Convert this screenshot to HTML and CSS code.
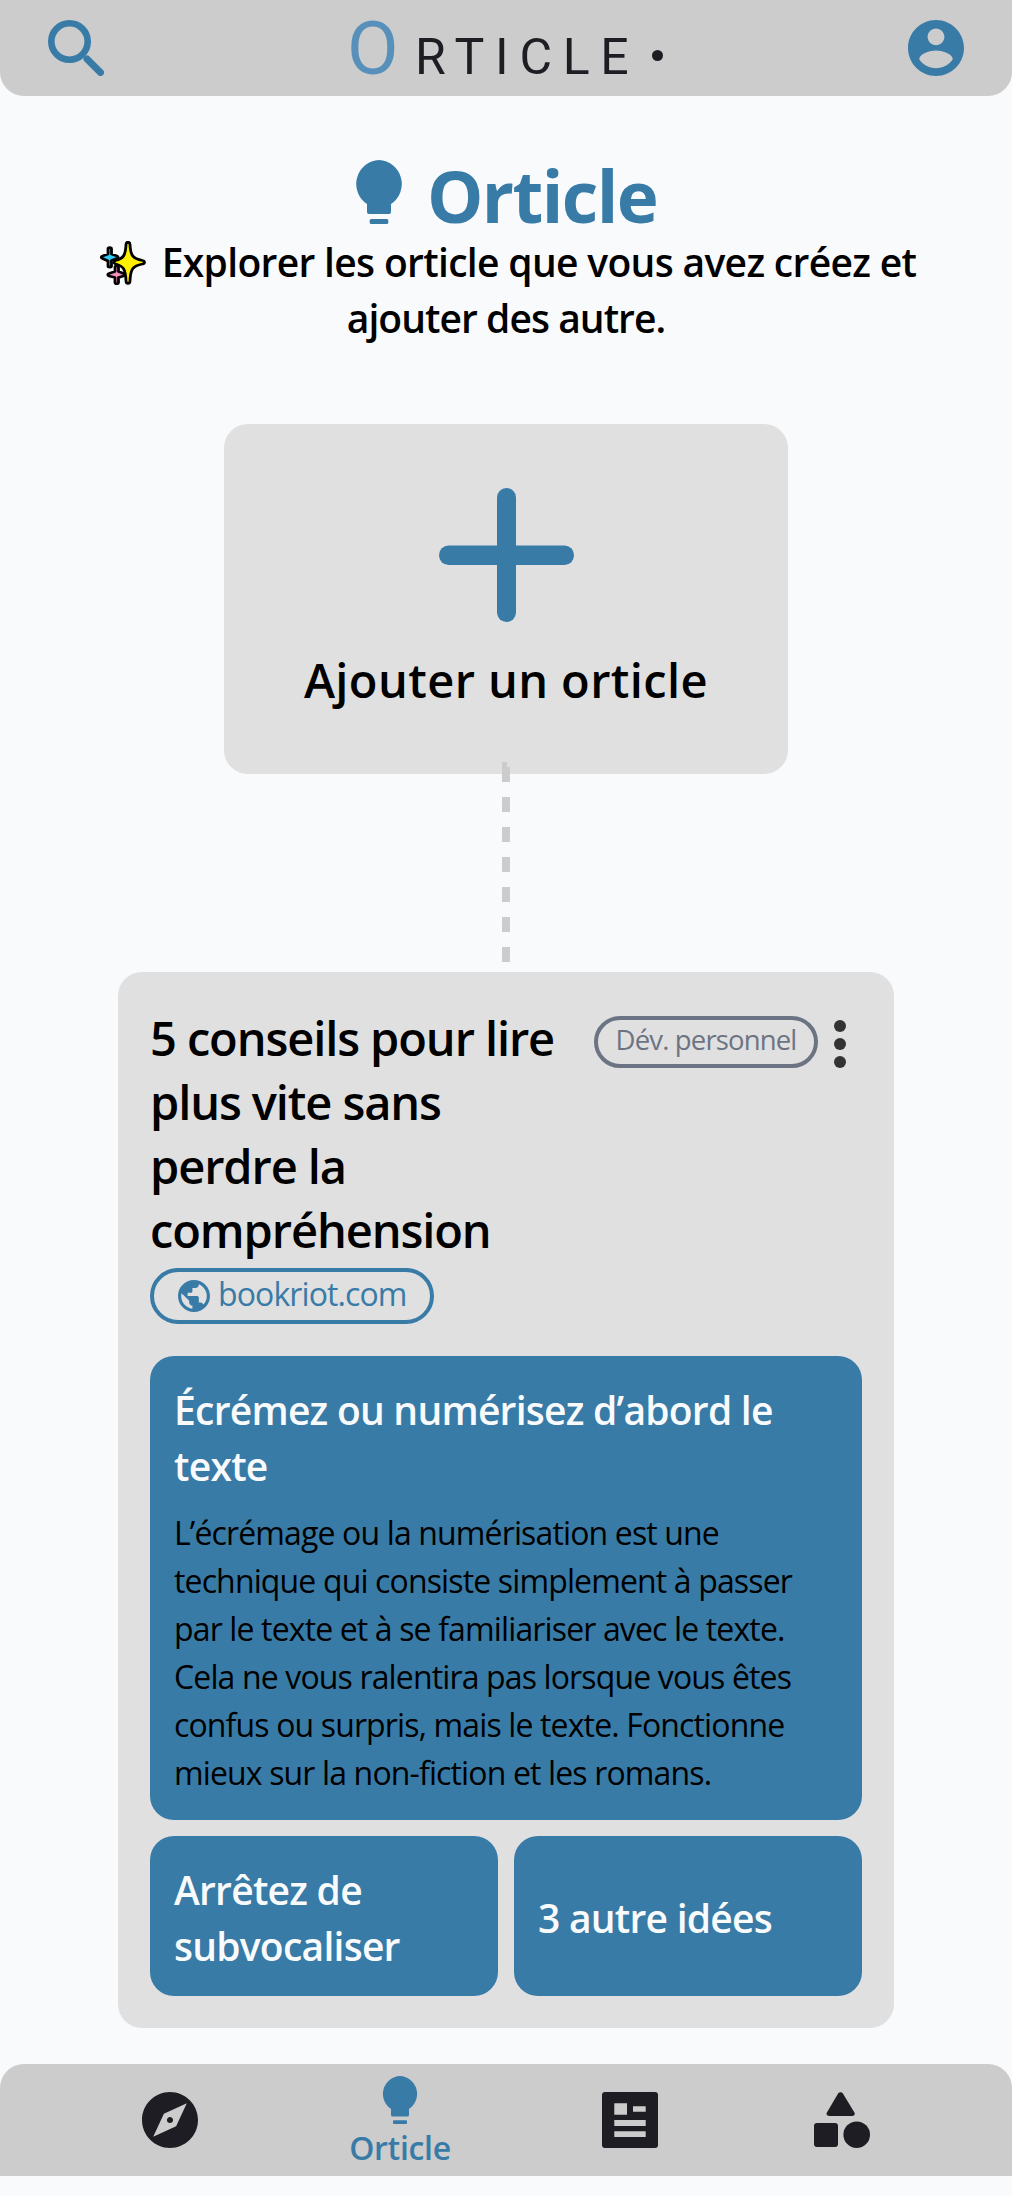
FILE: index.html
```html
<!DOCTYPE html>
<html lang="fr">
<head>
<meta charset="utf-8">
<title>Orticle</title>
<link rel="stylesheet" href="styles.css">
</head>
<body>
<header class="topbar">
  <svg class="icon-56" viewBox="0 0 56 56" fill="none" stroke="currentColor"><circle cx="21.5" cy="21.5" r="18.2" stroke-width="6.6"/><path d="M39 39 52.5 52.5" stroke-width="7" stroke-linecap="round"/></svg>
  <div class="logo"><span class="logo-o">O</span><span class="logo-rest">RTICLE</span><span class="logo-dot"></span></div>
  <svg class="icon-56" viewBox="2 2 20 20" fill="currentColor"><path d="M12 2C6.480 2 2 6.480 2 12s4.480 10 10 10 10-4.480 10-10S17.520 2 12 2zm0 3c1.660 0 3 1.340 3 3s-1.340 3-3 3-3-1.340-3-3 1.340-3 3-3zm0 14.200c-2.500 0-4.710-1.280-6-3.220.030-1.990 4-3.080 6-3.080 1.990 0 5.970 1.090 6 3.080-1.290 1.940-3.500 3.220-6 3.220z"/></svg>
</header>
<main class="page">
  <section class="intro">
    <h1 class="title">
      <svg class="bulb" viewBox="0 0 48 64" fill="currentColor"><path d="M24 0a24 24 0 0 1 12 44v8a2 2 0 0 1-2 2H14a2 2 0 0 1-2-2v-8A24 24 0 0 1 24 0z"/><rect x="14.700" y="59" width="18.600" height="5" rx="1.500"/></svg>
      <span>Orticle</span>
    </h1>
    <p class="subtitle"><svg class="sparkles" viewBox="0 0 46 44" stroke="#000" stroke-width="2.800" stroke-linejoin="round"><path fill="#f78fbe" d="M15 26c0-1.500 3.500-1.500 3.500 0v4.500l5 2c1.400.600 1.400 2 0 2.500l-5 1.500v5c0 1.700-3.500 1.700-3.500 0v-5L9 35c-1.600-.500-1.600-2 0-2.500l6-2z"/><path fill="#2fcaf5" d="M8 8c0-1.800 3.500-1.800 3.500 0v5l5.500 2c1.500.500 1.500 2 0 2.500l-5.500 2V25c0 1.500-3.500 1.500-3.500 0v-5l-5.500-2.500c-1.600-.500-1.600-2 0-2.500L8 13z"/><path fill="#fff000" d="M26 3.500c0-3 4-3 4 0 .500 11 2.500 14 12.500 16 2.600.500 2.600 3 0 3.500-10 2-12 5-12.500 17 0 3-4 3-4 0-.500-12-2.500-15-10.500-17-2-.500-2-3 0-3.500 8-2 10-5 10.500-16z"/></svg><span class="subtitle-lead">Explorer les orticle que vous avez créez et</span><br>ajouter des autre.</p>
  </section>
  <section class="add-card">
    <svg class="plus" viewBox="0 0 135 134" fill="currentColor"><rect x="58" width="19" height="134" rx="9.500"/><rect y="57.500" width="135" height="19.500" rx="9.500"/></svg>
    <h2 class="add-label">Ajouter un orticle</h2>
  </section>
  <svg class="connector" viewBox="0 0 8 200"><rect width="5" height="5"/><path d="M4 5V200" stroke-width="8" stroke-dasharray="15 15"/></svg>
  <article class="card">
    <div class="card-head">
      <h2 class="card-title">5 conseils pour lire<br>plus vite sans<br>perdre la<br>compréhension</h2>
      <span class="tag"><span>Dév. personnel</span></span>
      <svg class="dots" viewBox="0 0 12 48"><circle cx="6" cy="6" r="6"/><circle cx="6" cy="24" r="6"/><circle cx="6" cy="42" r="6"/></svg>
    </div>
    <a class="source"><svg class="globe" viewBox="2 2 20 20" fill="currentColor"><path d="M12 2C6.480 2 2 6.480 2 12s4.480 10 10 10 10-4.480 10-10S17.520 2 12 2zm-1 17.930c-3.950-.490-7-3.850-7-7.930 0-.620.080-1.210.210-1.790L9 15v1c0 1.100.900 2 2 2v1.930zm6.900-2.540c-.260-.810-1-1.390-1.900-1.390h-1v-3c0-.550-.450-1-1-1H8v-2h2c.550 0 1-.450 1-1V7h2c1.100 0 2-.900 2-2v-.410c2.930 1.190 5 4.060 5 7.410 0 2.080-.800 3.970-2.100 5.390z"/></svg><span>bookriot.com</span></a>
    <div class="ideas">
      <div class="idea idea-main">
        <h3 class="idea-title">Écrémez ou numérisez d’abord le<br>texte</h3>
        <p class="idea-text">L’écrémage ou la numérisation est une<br>technique qui consiste simplement à passer<br>par le texte et à se familiariser avec le texte.<br>Cela ne vous ralentira pas lorsque vous êtes<br>confus ou surpris, mais le texte. Fonctionne<br>mieux sur la non-fiction et les romans.</p>
      </div>
      <div class="idea"><h3 class="idea-title">Arrêtez de<br>subvocaliser</h3></div>
      <div class="idea"><h3 class="idea-title">3 autre idées</h3></div>
    </div>
  </article>
</main>
<nav class="bottombar">
  <a class="nav-item"><svg class="icon-56" viewBox="2 2 20 20" fill="currentColor"><path d="M12 10.900c-.610 0-1.100.490-1.100 1.100s.490 1.100 1.100 1.100c.610 0 1.100-.490 1.100-1.100s-.490-1.100-1.100-1.100zM12 2C6.480 2 2 6.480 2 12s4.480 10 10 10 10-4.480 10-10S17.520 2 12 2zm2.190 12.190L6 18l3.810-8.190L18 6l-3.810 8.190z"/></svg></a>
  <a class="nav-item active"><svg class="bulb-small" viewBox="0 0 48 64" fill="currentColor"><path d="M24 0a24 24 0 0 1 12 44v8a2 2 0 0 1-2 2H14a2 2 0 0 1-2-2v-8A24 24 0 0 1 24 0z"/><rect x="14.700" y="59" width="18.600" height="5" rx="1"/></svg><span>Orticle</span></a>
  <a class="nav-item"><svg class="icon-56" viewBox="0 0 56 56" fill="currentColor"><path fill-rule="evenodd" d="M3 0h50a3 3 0 0 1 3 3v50a3 3 0 0 1-3 3H3a3 3 0 0 1-3-3V3a3 3 0 0 1 3-3zm9.300 11.200v11.500H25V11.200zm18.700 3v5.600h12.700v-5.600zM12.300 28v6h31.400v-6zm0 11.200V45h31.400v-5.800z"/></svg></a>
  <a class="nav-item nav-last"><svg class="icon-56" viewBox="0 0 56 56" fill="currentColor"><path d="M24.100 1.400a2.900 2.900 0 0 1 4.800 0l11.500 19c1 1.800-.200 3.600-2.100 3.600H15.100c-2.100 0-3.200-1.800-2.200-3.600z"/><rect y="31" width="24" height="24" rx="3"/><circle cx="42.700" cy="42.700" r="13.300"/></svg></a>
</nav>
</body>
</html>
```
FILE: styles.css
```css
* { box-sizing: border-box; margin: 0; padding: 0; }
body {
  min-height: 2196px;
  background: #f9fafc;
  color: #000;
  font-family: "Open Sans", "Noto Sans", sans-serif;
  font-size: 32px;
  white-space: nowrap;
}
svg { display: block; flex: none; }
h1, h2, h3 { font-weight: 600; }
.icon-56 { width: 56px; height: 56px; }

.topbar {
  display: flex;
  align-items: center;
  justify-content: space-between;
  height: 96px;
  padding: 0 48px;
  background: #ccc;
  border-radius: 0 0 24px 24px;
  color: #387ba7;
}
.logo { display: flex; align-items: baseline; width: 318px; font-family: Roboto, sans-serif; height: 96px; line-height: 96px; }
.logo-o { font-size: 75px; color: #5790ba; width: 68px; flex: none; }
.logo-rest { font-size: 50px; color: #1e1d23; letter-spacing: 10.7px; }
.logo-dot { flex: none; align-self: flex-start; width: 11px; height: 11px; margin: 50px 0 0 13px; border-radius: 50%; background: #1e1d23; }

.page { display: flex; flex-direction: column; align-items: center; }
.intro { padding-top: 64px; text-align: center; }
.title {
  display: flex;
  justify-content: center;
  gap: 24px;
  height: 72px;
  color: #387ba7;
  font-size: 71px;
  font-weight: 700;
  line-height: 72px;
  letter-spacing: -1.6px;
}
.subtitle { padding-top: 2px; font-size: 39px; font-weight: 560; line-height: 56px; height: 112px; letter-spacing: -0.95px; }
.subtitle-lead { letter-spacing: -0.67px; }
.bulb { width: 48px; height: 64px; }
.sparkles { display: inline-block; width: 46px; height: 44px; margin: 0 16px 0 4px; vertical-align: -8px; }

.add-card {
  display: flex;
  flex-direction: column;
  align-items: center;
  width: 564px;
  height: 350px;
  margin-top: 80px;
  padding-top: 64px;
  background: #e0e0e0;
  border-radius: 24px;
}
.plus { width: 135px; height: 134px; color: #387ba7; }
.add-label { margin-top: 26px; font-size: 47px; font-weight: 560; line-height: 64px; letter-spacing: 0.4px; }
.connector { width: 8px; height: 200px; margin: -12px 0 10px; fill: #ccc; stroke: #ccc; stroke-width: 0; }

.card { width: 776px; height: 1056px; padding: 32px; background: #e0e0e0; border-radius: 24px; }
.card-head { display: flex; align-items: flex-start; height: 256px; }
.card-title { width: 444px; padding-top: 2px; font-size: 47px; font-weight: 560; line-height: 64px; letter-spacing: -1.1px; }
.tag {
  width: 224px;
  height: 52px;
  margin: 12px 16px 0 0;
  border: 4px solid #6c7483;
  border-radius: 26px;
  color: #6c7483;
  font-size: 27.5px;
  line-height: 40px;
  letter-spacing: -0.85px;
  text-align: center;
}
.dots { width: 12px; height: 48px; margin-top: 16px; fill: #333; }
.source {
  display: flex;
  gap: 8px;
  width: 284px;
  height: 56px;
  margin-top: 8px;
  padding: 8px 24px;
  border: 4px solid #387ba7;
  border-radius: 28px;
  color: #387ba7;
  line-height: 27px;
  letter-spacing: -0.9px;
}
.globe { width: 32px; height: 32px; }
.ideas { display: grid; grid-template-columns: 1fr 1fr; gap: 16px; margin-top: 32px; }
.idea { display: flex; flex-direction: column; justify-content: center; padding: 26px 24px 22px; border-radius: 24px; background: #387ba7; }
.idea-main { grid-column: span 2; gap: 15px; padding-bottom: 23px; }
.idea-title { color: #f9fafc; font-size: 39px; line-height: 56px; letter-spacing: -0.75px; }
.idea-text { line-height: 48px; letter-spacing: -0.86px; }

.bottombar {
  display: flex;
  gap: 152px;
  height: 112px;
  margin-top: 36px;
  padding-left: 142px;
  background: #ccc;
  border-radius: 24px 24px 0 0;
  color: #1e1d23;
}
.nav-item { display: flex; flex-direction: column; align-items: center; justify-content: center; }
.nav-last { margin-left: 4px; }
.active { width: 100px; justify-content: flex-start; padding-top: 12px; color: #387ba7; font-weight: 600; line-height: 48px; letter-spacing: -0.3px; }
.bulb-small { width: 36px; height: 48px; }
```
